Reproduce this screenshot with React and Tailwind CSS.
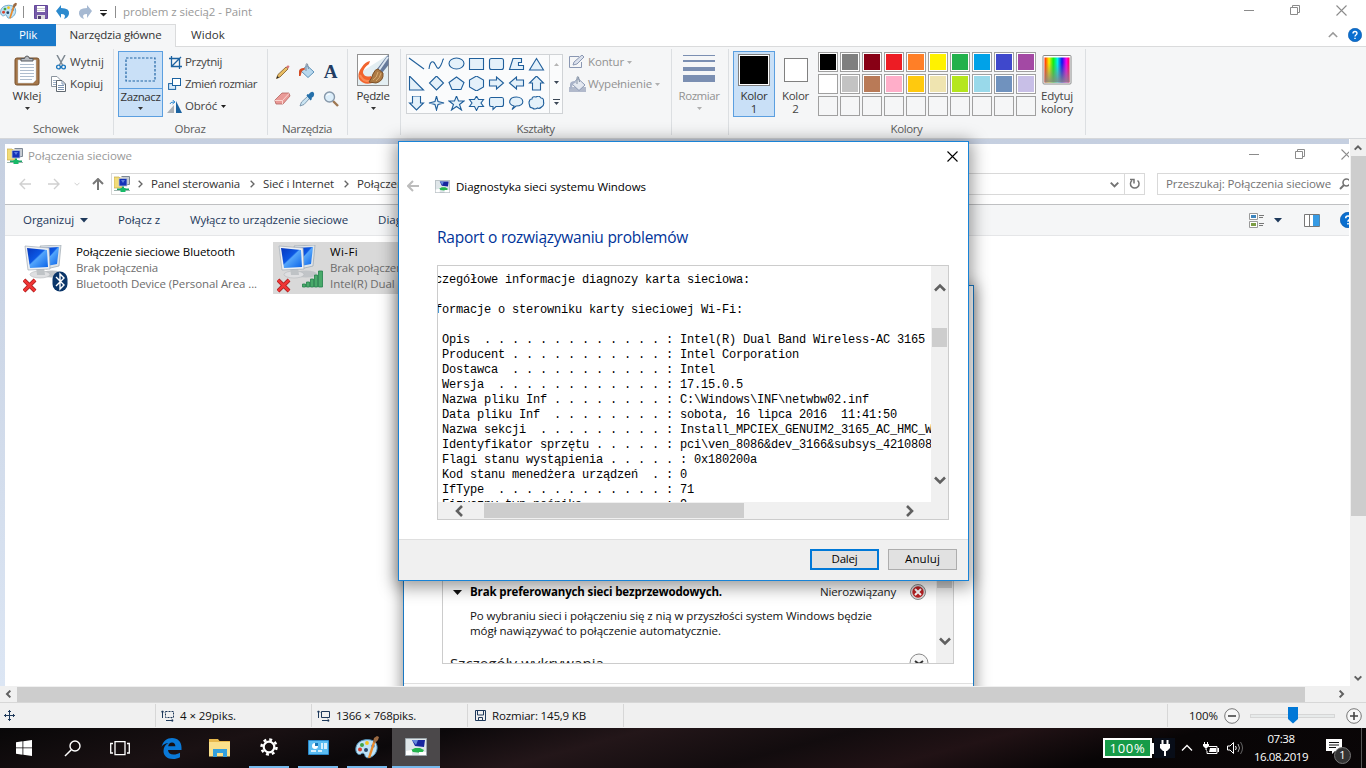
import React, { useLayoutEffect, useRef, useState } from "react";

// A single-line label whose tracking is computed so that it fills a given width.
function T({ w, className = "", children }) {
  const ref = useRef(null);
  const [spacing, setSpacing] = useState(0);
  useLayoutEffect(() => {
    const n = String(children).length;
    const natural = ref.current.getBoundingClientRect().width;
    if (w && n > 1) setSpacing((w - natural) / n);
  }, []);
  return (
    <span className={"block shrink-0 whitespace-nowrap " + className}>
      <span ref={ref} style={{ letterSpacing: spacing + "px" }}>{children}</span>
    </span>
  );
}

const Caret = ({ className = "text-[#1e1e1e]" }) => (
  <svg className={"shrink-0 " + className} width="5" height="3" viewBox="0 0 5 3"><path d="M0 0h5L2.500 3z" fill="currentColor" /></svg>
);

const Palette = ({ size = 17 }) => (
  <svg width={size} height={size} viewBox="0 0 24 24" className="shrink-0">
    <path d="M9 5C3 6 0 11 1 16c1 4 4 4 5 3 2-2 4 0 4 2 1 3 6 2 9-1 4-4 4-10 1-13-2-2-7-3-11-2z" fill="#bfe3f7" stroke="#4d8fb8" strokeWidth="1" />
    <circle cx="7" cy="10" r="2" fill="#41a447" /><circle cx="12" cy="8" r="1.900" fill="#f3c31b" />
    <circle cx="5" cy="14.500" r="2" fill="#d8412f" /><circle cx="11" cy="15" r="2" fill="#27496b" /><circle cx="18" cy="11" r="1.800" fill="#3a7fd0" />
    <path d="M14 23L19.500 6" stroke="#e98a2b" strokeWidth="2.400" /><path d="M18 7l1-4 3-2 2 1-1 3-3 3z" fill="#9b6a43" />
  </svg>
);

const MinIcon = () => <svg width="10" height="10" viewBox="0 0 10 10" className="text-[#8b8b8b]"><path d="M0 5.500h10" stroke="currentColor" /></svg>;
const RestoreIcon = () => <svg width="10" height="10" viewBox="0 0 10 10"><path d="M.5 2.500h7v7h-7zM2.500 2.500v-2h7v7h-2" fill="none" stroke="#8b8b8b" /></svg>;
const CloseIcon = ({ className = "text-[#8b8b8b]" }) => <svg width="11" height="11" viewBox="0 0 11 11" className={"shrink-0 " + className}><path d="M.5.5l10 10M10.500.5l-10 10" stroke="currentColor" strokeWidth="1.100" /></svg>;

const Help = ({ size = 14 }) => (
  <svg width={size} height={size} viewBox="0 0 14 14" className="shrink-0">
    <circle cx="7" cy="7" r="6.700" fill="#0a6fd0" stroke="#0655a8" strokeWidth=".6" />
    <path d="M5 5.400Q5 3.500 7 3.500T9 5.300Q9 6.300 7.900 7 7 7.600 7 8.600M7 9.700v1.300" fill="none" stroke="#fff" strokeWidth="1.400" />
  </svg>
);

// Chevrons used by scroll bars
const paths = { up: "M1 7l5-5 5 5", down: "M1 2l5 5 5-5", left: "M8 1L3 6l5 5", right: "M4 1l5 5-5 5" };
const Chev = ({ dir, size = 12, sw = 2.600, className = "text-[#606060]" }) => (
  <svg width={size} height={size} viewBox={dir === "up" || dir === "down" ? "0 -1.500 12 12" : "0 0 12 12"} className={"shrink-0 " + className}>
    <path d={paths[dir]} fill="none" stroke="currentColor" strokeWidth={sw} />
  </svg>
);

const ClipboardIcon = () => (
  <svg width="26" height="32" viewBox="0 0 26 32">
    <rect x="1" y="4" width="24" height="27" rx="2" fill="#a5774a" stroke="#77502c" />
    <path d="M4 6h18v20l-3 3H4z" fill="#fdfeff" stroke="#c5ccd3" strokeWidth=".5" />
    <path d="M6 10.500h14M6 13.500h14M6 16.500h14M6 19.500h14M6 22.500h14M6 25.500h12" stroke="#aebdce" />
    <path d="M7 7V4.500h3.500Q11 2 13 2t2.500 2.500H19V7z" fill="#b6bac0" stroke="#55595e" />
  </svg>
);
const ScissorsIcon = () => (
  <svg width="10" height="15" viewBox="0 0 10 15"><path d="M1 0l5.500 10M9 0L3.500 10" stroke="#7d8790" strokeWidth="1.500" />
    <circle cx="2.500" cy="12" r="1.900" fill="none" stroke="#1d77bd" strokeWidth="1.400" /><circle cx="7.500" cy="12" r="1.900" fill="none" stroke="#1d77bd" strokeWidth="1.400" /></svg>
);
const CopyIcon = () => (
  <svg width="16" height="16" viewBox="0 0 16 16"><path d="M.5.5H6l3 3v7H.5z" fill="#fff" stroke="#8b949e" /><path d="M2 4.500h5M2 6.500h5M2 8.500h3" stroke="#9db1c8" />
    <path d="M5.500 4.500H11l3.500 3.500v7.500h-9z" fill="#fff" stroke="#606870" /><path d="M7 9.500h6M7 11.500h6M7 13.500h6M11 5v3h3" fill="none" stroke="#7c95b4" /></svg>
);
const CropIcon = () => <svg width="13" height="13" viewBox="0 0 13 13"><path d="M2.500 0v10.500H13M0 2.500h10.500V13M3 10l9-9" fill="none" stroke="#1b62a0" strokeWidth="1.300" /></svg>;
const ResizeIcon = () => <svg width="13" height="12" viewBox="0 0 13 12"><rect x=".6" y="5.600" width="7" height="5.800" fill="#d8eafa" stroke="#1b62a0" /><rect x="4.500" y=".5" width="8" height="7" fill="#fff" stroke="#1b62a0" /></svg>;
const RotateIcon = () => <svg width="15" height="13" viewBox="0 0 15 13"><path d="M7 5v8H0z" fill="#aab0b6" /><path d="M9 1v12h6z" fill="#1b62a0" /><path d="M3 4Q3 2 7 2M5.500 0L8 2 5.500 4" fill="none" stroke="#2f8ad2" /></svg>;
const PencilIcon = () => <svg width="16" height="16" viewBox="0 0 16 16"><path d="M1.500 14.500l1.500-4L11 3l2 2-8 8z" fill="#e9bd62" stroke="#7c5a28" strokeWidth=".8" /><path d="M11 3l1.500-1.500q1.500-.5 2 1L13 5z" fill="#d97878" /><path d="M1.500 14.500l1-2.500 1.500 1.500z" fill="#222" /></svg>;
const BucketIcon = ({ gray }) => (
  <svg width="17" height="17" viewBox="0 0 17 17">
    {gray && <path d="M0 11h17v5H0z" fill="#b1b9cb" />}
    <path d="M9 2.500l7 6.500-6 5.500L3 8z" fill={gray ? "#e4e8f0" : "#b8d8ee"} stroke={gray ? "#8c99b5" : "#5e93b9"} />
    <path d="M8 8V2q0-2 1.500-1l1 5" fill="none" stroke="#8290a3" />
    <path d="M1 13V8.500q0-3.500 5-3.500l1.500 1-3.500 2-1.500 5z" fill={gray ? "#a8b2c8" : "#d44c25"} />
  </svg>
);
const EraserIcon = () => <svg width="17" height="14" viewBox="0 0 17 14"><path d="M1 8l7-7h7l1 3-7 8H2L1 9z" fill="#ea9a97" stroke="#b46460" strokeWidth=".8" /><path d="M1 8.500h7.500L15.500 1M8.500 8.500V12" fill="none" stroke="#fad5d0" /></svg>;
const PickerIcon = () => <svg width="16" height="16" viewBox="0 0 16 16"><path d="M1 15l1.500-4L9 5l2 2-6 6.500z" fill="#cae4f2" stroke="#6987a0" strokeWidth=".8" /><path d="M7.500 4.500l1-1.500 1 .5Q12 0 14 1t.5 4.500l-2 1.500.5 1-1.500 1.500z" fill="#2570aa" /></svg>;
const LensIcon = () => <svg width="16" height="16" viewBox="0 0 16 16"><path d="M10 10l5 5" stroke="#9e7752" strokeWidth="2.400" /><circle cx="6.500" cy="6" r="5" fill="#dceefa" stroke="#8798aa" strokeWidth="1.400" /><path d="M3.500 5Q4 3 7 3" stroke="#fff" fill="none" /></svg>;
const BrushIcon = () => (
  <svg width="32" height="32" viewBox="0 0 32 32"><rect x=".5" y=".5" width="31" height="31" fill="#e3eef2" stroke="#939393" />
    <path d="M1 1h30L1 20z" fill="#fff" />
    <path d="M5 13Q8 8 13 7l-1 3Q6 14 6 19q2 5 8 3l3 6c-5 3-12 2-15-3Q0 19 5 13z" fill="#f1642e" />
    <path d="M3 21q3 7 10 6" fill="none" stroke="#fa8a55" strokeWidth="2" />
    <path d="M20 15L30 2l1.500-1v10L25 19z" fill="#667a9b" /><path d="M22 16l9-13" stroke="#dbe6f2" strokeWidth="2" />
    <path d="M26 19q1 8-7 10l-7-1q3-4 4-8 2-5 5-5z" fill="#ad7b45" stroke="#7a4f26" /><path d="M16 26q4-2 5-8M19 27q4-3 5-8" fill="none" stroke="#d8ac70" /></svg>
);
const RainbowIcon = () => (
  <svg width="30" height="30" viewBox="0 0 30 30"><defs>
    <linearGradient id="hue"><stop offset="0" stopColor="#f20" /><stop offset=".18" stopColor="#fe0" /><stop offset=".35" stopColor="#1e1" /><stop offset=".52" stopColor="#0ee" /><stop offset=".7" stopColor="#11e" /><stop offset=".87" stopColor="#f0e" /><stop offset="1" stopColor="#f04" /></linearGradient>
    <linearGradient id="fade" x2="0" y2="1"><stop offset=".2" stopColor="#888" stopOpacity="0" /><stop offset="1" stopColor="#888" stopOpacity=".9" /></linearGradient></defs>
    <rect x="1" y=".5" width="28" height="28.500" rx="1" fill="#fff" stroke="#898989" /><path d="M2.500 2.500h25v25h-25z" fill="url(#hue)" /><path d="M2.500 2.500h25v25h-25z" fill="url(#fade)" /></svg>
);

const shapes = [
  "M1 1l15 11", "M1 12C2 4 5 3 7 7s3 7 6 1 1-6 3-6", "M1 6.500a7.500 5.500 0 1 0 15 0a7.500 5.500 0 1 0-15 0", "M1.500 1.500h14v11h-14z", "M3.500 1.500h10q2 0 2 2v7q0 2-2 2h-10q-2 0-2-2v-7q0-2 2-2z", "M5 1.500h8.500v4h-3v3h5v4H1.500z", "M8.500 1.500l7 11.500h-14z",
  "M1.500 0v14h14z", "M8.500 0l7 7-7 7-7-7z", "M8.500 1l7.500 5.500-3 7h-9l-3-7z", "M8.500 0l7 4v7l-7 4-7-4V4z", "M1.500 4h7V1l7 6-7 6v-3h-7z", "M15.500 4h-7V1l-7 6 7 6v-3h7z", "M8.500 0l7 7h-3v7h-8V7h-3z",
  "M4.500 0h8v7h3l-7 7-7-7h3z", "M8.500 0l1.500 5.500 6 1.500-6 1.500L8.500 14 7 8.500 1 7l6-1.500z", "M8.500 0l2 5h5.500l-4.500 3.500 2 5.500-5-3.500-5 3.500 2-5.500L1 5h5.500z", "M8.500 0l2 3.500h5L13 7l2.500 3.500h-5l-2 4-2-4h-5L4 7 1.500 3.500h5z", "M3 1.500h11q1.500 0 1.500 2v5q0 2-2 2H8l-3 3v-3H3q-1.500 0-1.500-2v-5q0-2 1.500-2z", "M6 10C-1 8 1 1 8.500 1S18 10 8 10l-4 3.500z", "M4 3q0-3 4-2 3-2 5 1 3 0 2.500 4 1 3-2 5-2 2-4 1-3 2-5 0-3 0-3-3-1-3 0-4 0-2 2.500-2z"
];

const swatches = ["bg-black", "bg-[#7f7f7f]", "bg-[#880015]", "bg-[#ed1c24]", "bg-[#ff7f27]", "bg-[#fff200]", "bg-[#22b14c]", "bg-[#00a2e8]", "bg-[#3f48cc]", "bg-[#a349a4]",
  "bg-white", "bg-[#c3c3c3]", "bg-[#b97a57]", "bg-[#ffaec9]", "bg-[#ffc90e]", "bg-[#efe4b0]", "bg-[#b5e61d]", "bg-[#99d9ea]", "bg-[#7092be]", "bg-[#c8bfe7]",
  "", "", "", "", "", "", "", "", "", ""];

const Group = ({ className, label, labelWidth, children }) => (
  <div className={"relative flex h-[92px] shrink-0 flex-col pt-1 " + className}>
    <div className="flex h-[70px]">{children}</div>
    {label && <T w={labelWidth} className="mr-0.5 self-center leading-4 text-[#5c5c5c]">{label}</T>}
    <div className="absolute right-0 top-0.5 h-[86px] w-px bg-[#dcdfe2]" />
  </div>
);

function Ribbon() {
  return (
    <div className="flex h-[92px] shrink-0 border-b border-[#d5d7da] bg-[#f5f6f7]">
      <Group className="w-[114px]" label="Schowek" labelWidth={46}>
        <div className="ml-3 flex w-[30px] flex-col items-center pt-[3px]">
          <ClipboardIcon /><T w={29} className="mt-0.5 leading-4">Wklej</T><Caret className="mt-[3px]" />
        </div>
        <div className="ml-[9px] flex flex-col text-[#444]">
          <div className="flex h-[22px] items-center"><div className="flex w-[19px] justify-center"><ScissorsIcon /></div><T w={34}>Wytnij</T></div>
          <div className="flex h-[22px] items-center"><div className="w-[19px]"><CopyIcon /></div><T w={33}>Kopiuj</T></div>
        </div>
      </Group>
      <Group className="w-[154px]" label="Obraz" labelWidth={31}>
        <div className="ml-1 flex h-[66px] w-[45px] flex-col items-center border border-[#5b9fe0] bg-[#c9e0f7]">
          <div className="flex h-[37px] w-full items-center justify-center border-b border-[#5b9fe0]">
            <svg width="31" height="26" viewBox="0 0 31 26"><path d="M1 1h29v23H1z" fill="none" stroke="#2064a4" strokeWidth="1.200" strokeDasharray="2.500 1.500" /></svg>
          </div>
          <T w={40} className="leading-[15px]">Zaznacz</T><Caret className="mt-[3px]" />
        </div>
        <div className="ml-1 flex flex-col text-[#444]">
          <div className="flex h-[22px] items-center"><div className="w-[18px] pl-0.5"><CropIcon /></div><T w={37}>Przytnij</T></div>
          <div className="flex h-[22px] items-center"><div className="w-[18px] pl-px"><ResizeIcon /></div><T w={72}>Zmień rozmiar</T></div>
          <div className="flex h-[22px] items-center"><div className="w-[18px]"><RotateIcon /></div><T w={32}>Obróć</T><Caret className="ml-1 text-[#1e1e1e]" /></div>
        </div>
      </Group>
      <Group className="w-[80px]" label="Narzędzia" labelWidth={50}>
        <div className="ml-1.5 mt-[7px] grid h-[55px] grid-cols-3 grid-rows-2 place-items-center gap-x-[7px]">
          <PencilIcon /><BucketIcon /><span className="font-['Liberation_Serif',serif] text-[19px] font-bold leading-5 text-[#223d63]">A</span>
          <EraserIcon /><PickerIcon /><LensIcon />
        </div>
      </Group>
      <Group className="w-[53px]">
        <div className="flex w-[50px] flex-col items-center pt-[3px]"><BrushIcon /><T w={33} className="mt-0.5 leading-4">Pędzle</T><Caret className="mt-[3px]" /></div>
      </Group>
      <Group className="w-[271px]" label="Kształty" labelWidth={38}>
        <div className="ml-[5px] mt-[3px] flex h-[60px] w-[157px] border border-[#d0d3d6] bg-[#fafbfc]">
          <div className="grid w-[142px] grid-cols-7 place-items-center pr-[3px]">
            {shapes.map((d, i) => <svg key={i} width="17" height="15" viewBox="0 0 17 15"><path d={d} fill={i < 2 ? "none" : "#e4f1fa"} stroke="#205f9b" strokeWidth="1.100" /></svg>)}
          </div>
          <div className="flex grow flex-col items-center justify-around border-l border-[#d0d3d6] text-[#3b4756]">
            <Caret className="rotate-180 text-[#b5b5b5]" /><Caret className="" />
            <div className="flex flex-col items-center gap-0.5"><div className="h-px w-[7px] bg-[#3b4756]" /><Caret className="" /></div>
          </div>
        </div>
        <div className="ml-1.5 flex flex-col text-[#929292]">
          <div className="flex h-[22px] items-center"><div className="w-[19px]"><svg width="16" height="14" viewBox="0 0 16 14"><path d="M10 1.500H.5v11h12V7" fill="none" stroke="#8a97b2" /><path d="M4 10l1-3 8-7 2 2-7 7z" fill="#dbe1ed" stroke="#8a97b2" /></svg></div><T w={36}>Kontur</T><Caret className="ml-[3px] text-[#b0b0b0]" /></div>
          <div className="flex h-[22px] items-center"><div className="w-[19px]"><BucketIcon gray /></div><T w={64}>Wypełnienie</T><Caret className="ml-[3px] text-[#b0b0b0]" /></div>
        </div>
      </Group>
      <Group className="w-[57px]">
        <div className="flex w-[54px] flex-col items-center pt-1 text-[#929292]">
          <div className="flex h-[31px] w-8 flex-col items-stretch"><div className="h-px bg-[#7b8fb2]" /><div className="mt-1 h-0.5 bg-[#7b8fb2]" /><div className="mt-[5px] h-1 bg-[#7b8fb2]" /><div className="mt-1 h-[7px] bg-[#7b8fb2]" /></div>
          <T w={41} className="mt-0.5 leading-4">Rozmiar</T><Caret className="mt-[3px] text-[#b0b0b0]" />
        </div>
      </Group>
      <Group className="w-[357px]" label="Kolory" labelWidth={32}>
        <div className="ml-1 flex h-[66px] w-[42px] flex-col items-center border border-[#5b9fe0] bg-[#c9e0f7] pt-0.5">
          <div className="h-8 w-8 border border-[#808080] bg-white p-px"><div className="h-full w-full bg-black" /></div>
          <T w={27} className="mt-[3px] leading-[13px]">Kolor</T><T className="leading-[13px]">1</T>
        </div>
        <div className="flex w-[41px] flex-col items-center pt-[7px] text-[#444]">
          <div className="h-6 w-6 border border-[#808080] bg-white" />
          <T w={27} className="mt-[7px] leading-[13px]">Kolor</T><T className="leading-[13px]">2</T>
        </div>
        <div className="ml-0.5 mt-px grid h-16 grid-cols-10 gap-0.5">
          {swatches.map((c, i) => <div key={i} className={"h-5 w-5 border border-[#a0a0a0] p-px " + (c ? "bg-white" : "bg-[#f5f6f7]")}><div className={"h-full w-full " + c} /></div>)}
        </div>
        <div className="ml-[3px] flex w-[36px] flex-col items-center pt-1 text-[#444]"><RainbowIcon /><T w={32} className="mt-1 leading-[13px]">Edytuj</T><T w={32} className="leading-[13px]">kolory</T></div>
      </Group>
    </div>
  );
}

function TitleBar() {
  return (
    <div className="flex h-6 shrink-0 items-center bg-white">
      <div className="w-[23px] pb-1"><Palette size={17} /></div>
      <div className="h-3 w-px bg-[#8e8e8e]" />
      <svg className="ml-2.5" width="14" height="14" viewBox="0 0 14 14"><path d="M.5.5h13v13h-13z" fill="#765ba8" stroke="#64479a" /><path d="M3 1h8v6H3z" fill="#fff" /><path d="M3 3.500h8M3 5.500h8" stroke="#ccc" /><path d="M3 10h8v4H3z" fill="#ddd" /><path d="M4 11h3v3H4z" fill="#514070" /></svg>
      <svg className="ml-2" width="15" height="15" viewBox="0 0 15 15"><path d="M5 0v3q9 0 8 6-1 4-5 5 3-5-3-5v4L0 6z" fill="#2c8ace" /></svg>
      <svg className="ml-1.5" width="15" height="15" viewBox="0 0 15 15"><path d="M10 0v3q-9 0-8 6 1 4 5 5-3-5 3-5v4l5-7z" fill="#a6b9d2" /></svg>
      <svg className="ml-2 mt-0.5" width="7" height="7" viewBox="0 0 7 7"><path d="M0 .5h7" stroke="#222" /><path d="M0 3h7L3.500 6.500z" fill="#222" /></svg>
      <div className="ml-2 h-3 w-px bg-[#8e8e8e]" />
      <T w={129} className="ml-[7px] text-[#999]">problem z siecią2 - Paint</T>
      <div className="ml-auto flex gap-9 pb-1 pr-[19px]"><MinIcon /><RestoreIcon /><CloseIcon /></div>
    </div>
  );
}

function Tabs() {
  return (
    <div className="flex h-[23px] shrink-0 items-stretch border-b border-[#dadbdc] bg-white">
      <div className="flex w-14 items-center justify-center bg-[#1979ca] text-white"><T w={18}>Plik</T></div>
      <div className="-mb-px flex w-[120px] items-center justify-center border-r border-t border-[#dadbdc] bg-[#f5f6f7] pb-0.5"><T w={92}>Narzędzia główne</T></div>
      <div className="ml-[15px] flex items-center"><T w={34}>Widok</T></div>
      <div className="ml-auto flex items-center gap-2.5 pr-1"><Chev dir="up" size={10} sw={1.800} className="text-[#999]" /><Help /></div>
    </div>
  );
}

const NetIcon = () => (
  <svg width="16" height="17" viewBox="0 0 16 17" className="shrink-0"><path d="M0 1h5l1 1h2v10H0z" fill="#f2dc78" stroke="#c4a94a" strokeWidth=".7" /><path d="M7.500.5h8v8h-3" fill="#c9cdd3" stroke="#7d8894" /><path d="M5 2.500h8v7.500H5z" fill="#1532b9" stroke="#b8c3d4" strokeWidth=".8" /><path d="M7 4h4l-2 3z" fill="#5d7de0" /><path d="M8 10.500h2v2h5v2H3v-2h5z" fill="#19a567" /><path d="M0 14.500h16" stroke="#9cb4ae" /><path d="M6.500 12h5v4h-5z" fill="#18bb68" /></svg>
);
const ScreenIcon = ({ w = 15, h = 13 }) => (
  <svg width={w} height={h} viewBox="0 0 22 18" preserveAspectRatio="none" className="shrink-0"><path d="M.5.5h21v17H.5z" fill="#dfe6e9" stroke="#9ba5ab" /><path d="M7 2h13l-1 7-9-1z" fill="#17259e" /><path d="M7 2h6l-2 5z" fill="#6589da" /><path d="M6 12l4-2h5l4 2-2 3-9-1z" fill="#24b44d" /><path d="M1 13l6-1v5H1zM14 14h7v3h-7z" fill="#fff" /></svg>
);
const Computers = ({ kind }) => (
  <svg width="48" height="50" viewBox="0 0 48 50" className="shrink-0">
    <defs><linearGradient id="scr" x2="1" y2="1"><stop offset="0" stopColor="#0737bd" /><stop offset=".45" stopColor="#0c58e4" /><stop offset=".5" stopColor="#54a6fb" /><stop offset="1" stopColor="#0962e8" /></linearGradient></defs>
    <ellipse cx="29" cy="29" rx="11" ry="3.500" fill="#c1c4c7" /><ellipse cx="17" cy="29.500" rx="10" ry="3.500" fill="#dedfe1" stroke="#b6b9bc" strokeWidth=".6" />
    <path d="M17 1l21-1-2 21-13 3z" fill="#dee4e9" stroke="#9ba6b0" strokeWidth=".7" /><path d="M19 3l17-1-2 17-10 2z" fill="url(#scr)" />
    <path d="M13 22h8l1 8h-8z" fill="#bfc3c6" /><path d="M2 1l24 2 1 21-22 1z" fill="#eef1f4" stroke="#a2abb4" strokeWidth=".7" /><path d="M4 3l20 2 1 17-18 1z" fill="url(#scr)" />
    <path d="M1 35l11 11M12 35L1 46" stroke="#9f1d1d" strokeWidth="4" /><path d="M1 35l11 11M12 35L1 46" stroke="#f03535" strokeWidth="2.500" />
    {kind === "bt" ? <g><rect x="29.500" y="26.500" width="15" height="20" rx="7.500" fill="#0a3569" /><path d="M33 32l8 8-4 4V29l4 4-8 8" fill="none" stroke="#fff" strokeWidth="1.400" /></g>
      : <g fill="#49aa6a" stroke="#22804a" strokeWidth=".8"><path d="M25.500 39h3v3h-3zM29.500 37h3v5h-3zM33.500 34h3v8h-3zM37.500 30h3v12h-3zM41.500 26h4v16h-4z" /></g>}
  </svg>
);

const Arrow = ({ dir = "left", className, big }) => <svg width={12} height={12} viewBox="0 0 12 12" className={"shrink-0 " + className + (dir === "right" ? " rotate-180" : dir === "up" ? " rotate-90" : "")}><path d="M12 6H1M6 1L1 6l5 5" fill="none" stroke="currentColor" strokeWidth={big ? 2 : 1.400} /></svg>;
const Crumb = () => <Chev dir="right" size={8} sw={2} className="text-[#666]" />;

function Explorer() {
  return (
    <div className="ml-[5px] mt-[5px] flex h-[542px] w-[1344px] flex-col overflow-hidden bg-white">
      <div className="flex h-6 shrink-0 items-center pl-0.5">
        <NetIcon /><T w={104} className="ml-[5px] text-[#999]">Połączenia sieciowe</T>
        <div className="-mr-[3px] ml-auto flex shrink-0 gap-9 pb-1"><MinIcon /><RestoreIcon /><CloseIcon /></div>
      </div>
      <div className="flex h-9 shrink-0 items-start pt-[5px]">
        <div className="flex h-[22px] w-[106px] shrink-0 items-center pl-3.5">
          <Arrow className="text-[#d0d0d0]" /><Arrow dir="right" className="ml-[17px] text-[#d0d0d0]" /><Chev dir="down" size={6} sw={2} className="ml-3.5 text-[#d0d0d0]" /><Arrow dir="up" big className="ml-3 text-[#777]" />
        </div>
        <div className="flex h-[22px] w-[1034px] shrink-0 items-center border border-[#d9d9d9] pl-0.5">
          <NetIcon /><div className="ml-1.5"><Crumb /></div><T w={89} className="ml-[7px]">Panel sterowania</T><div className="ml-2"><Crumb /></div><T w={71} className="ml-[7px]">Sieć i Internet</T><div className="ml-2"><Crumb /></div><T w={104} className="ml-[7px]">Połączenia sieciowe</T>
          <div className="ml-auto mr-[5px]"><Chev dir="down" size={9} className="text-[#737373]" /></div>
          <div className="flex h-full w-5 items-center justify-center border-l border-[#d9d9d9]">
            <svg width="11" height="12" viewBox="0 0 11 12"><path d="M8.500 2.500A4.300 4.300 0 1 1 3 2.500M1 1.500h4v4" fill="none" stroke="#737373" strokeWidth="1.500" /></svg>
          </div>
        </div>
        <div className="ml-3 flex h-[22px] w-[200px] shrink-0 items-center border border-[#d9d9d9] pl-2 text-[#737373]">
          <T w={165}>Przeszukaj: Połączenia sieciowe</T>
          <svg className="ml-2 shrink-0" width="12" height="12" viewBox="0 0 12 12"><circle cx="7.500" cy="4.500" r="3.500" fill="none" stroke="#737373" strokeWidth="1.600" /><path d="M5 7l-4 4" stroke="#737373" strokeWidth="2" /></svg>
        </div>
      </div>
      <div className="flex h-8 shrink-0 items-center border-b border-t border-b-[#e5e6e8] border-t-[#bfc0c2] bg-[#f5f6f7] text-[#1e395b]">
        <T w={51} className="ml-[18px]">Organizuj</T><svg className="ml-1.5" width="8" height="5" viewBox="0 0 8 5"><path d="M0 0h8L4 4.500z" fill="#1e395b" /></svg>
        <T w={42} className="ml-[30px]">Połącz z</T><T w={158} className="ml-[30px]">Wyłącz to urządzenie sieciowe</T><T w={128} className="ml-[30px]">Diagnozuj to połączenie</T>
        <svg className="ml-auto shrink-0" width="15" height="15" viewBox="0 0 15 15"><path d="M.5.5h8v6h-8zM.5 8.500h8v6h-8z" fill="#fff" stroke="#999" /><path d="M2 2h5v3H2z" fill="#3c84bd" /><path d="M2 10h5v3H2z" fill="#7c9d44" /><path d="M10 2.500h5M10 4.500h4M10 10.500h5M10 12.500h4" stroke="#777" /></svg>
        <svg className="ml-2.5 shrink-0" width="8" height="5" viewBox="0 0 8 5"><path d="M0 0h8L4 4.500z" fill="#1e395b" /></svg>
        <svg className="ml-[22px] shrink-0" width="16" height="13" viewBox="0 0 16 13"><path d="M.5.5h15v12H.5zM5.500 1v11" fill="#fff" stroke="#777" /><path d="M9 1h6.500v11H9z" fill="#379be4" /></svg>
        <div className="-mr-[7px] ml-5 shrink-0"><Help size={16} /></div>
      </div>
      <div className="flex pt-1.5">
        <div className="ml-[15px] flex h-[52px] w-[253px] pl-[3px] pt-[3px]"><Computers kind="bt" />
          <div className="-mt-px ml-[5px] leading-4 text-[#6d6d6d]"><T w={159} className="text-black">Połączenie sieciowe Bluetooth</T><T w={82}>Brak połączenia</T><T w={181}>Bluetooth Device (Personal Area ...</T></div></div>
        <div className="flex h-[52px] w-[253px] bg-[#d9d9d9] pl-1 pt-[3px]"><Computers kind="wifi" />
          <div className="-mt-px ml-[5px] leading-4 text-[#6d6d6d]"><T w={28} className="text-black">Wi-Fi</T><T w={82}>Brak połączenia</T><T w={190}>Intel(R) Dual Band Wireless-AC 3165</T></div></div>
      </div>
    </div>
  );
}

function Troubleshooter() {
  return (
    <div className="absolute left-[403px] top-[146px] flex h-[420px] w-[571px] flex-col border border-[#1a78c2] bg-white shadow-[0_2px_14px_2px_rgba(0,0,0,0.4)]">
      <div className="ml-[38px] flex h-[378px] w-[512px] flex-none border border-t-0 border-[#ccc]">
        <div className="flex grow flex-col overflow-hidden pt-[298px]">
          <div className="flex h-4 items-center"><svg className="ml-2.5 shrink-0" width="9" height="5" viewBox="0 0 9 5"><path d="M0 0h9L4.500 5z" fill="#111" /></svg><T w={252} className="ml-2 font-bold text-black">Brak preferowanych sieci bezprzewodowych.</T><T w={76} className="ml-auto text-[#222]">Nierozwiązany</T>
            <svg className="ml-3.5 mr-[10px] shrink-0" width="16" height="16" viewBox="0 0 16 16"><circle cx="8" cy="8" r="7.500" fill="#ddd" stroke="#888" /><circle cx="8" cy="8" r="5.700" fill="#bd2325" /><path d="M5 5l6 6M11 5l-6 6" stroke="#fff" strokeWidth="2" /></svg></div>
          <div className="ml-[27px] mt-2 leading-[15px] text-[#111]"><T w={402}>Po wybraniu sieci i połączeniu się z nią w przyszłości system Windows będzie</T><T w={251}>mógł nawiązywać to połączenie automatycznie.</T></div>
          <div className="flex h-[26px] shrink-0 justify-between px-[7px] pt-[13px]"><T w={154} className="mt-px text-[15px] leading-[22px] text-[#222]">Szczegóły wykrywania</T><svg className="mt-0.5 shrink-0" width="20" height="20" viewBox="0 0 20 20"><circle cx="10" cy="10" r="9" fill="#f6f6f6" stroke="#888" /><path d="M6 8l4 3 4-3" fill="none" stroke="#333" strokeWidth="2" /></svg></div>
        </div>
        <div className="flex w-[17px] shrink-0 flex-col items-center justify-end bg-[#f0f0f0] pb-4"><div className="mb-[47px] h-[50px] w-[15px] bg-[#cdcdcd]" /><Chev dir="down" /></div>
      </div>
      <div className="mt-[19px] h-[18px] shrink-0 border-t border-[#dfdfdf] bg-[#fcfcfc]" />
    </div>
  );
}

const dots = (n) => Array(n).fill(".").join(" ");
const line = (name, gap, n, value) => "   " + name + " ".repeat(gap) + dots(n) + " : " + value;
const report = [
  "Szczegółowe informacje diagnozy karta sieciowa:", "", "Informacje o sterowniku karty sieciowej Wi-Fi:", "",
  line("Opis", 2, 13, "Intel(R) Dual Band Wireless-AC 3165"), line("Producent", 1, 11, "Intel Corporation"), line("Dostawca", 2, 11, "Intel"),
  line("Wersja", 2, 12, "17.15.0.5"), line("Nazwa pliku Inf", 1, 8, "C:\\Windows\\INF\\netwbw02.inf"), line("Data pliku Inf", 2, 8, "sobota, 16 lipca 2016  11:41:50"),
  line("Nazwa sekcji", 2, 9, "Install_MPCIEX_GENUIM2_3165_AC_HMC_WIN"), line("Identyfikator sprzętu", 1, 5, "pci\\ven_8086&dev_3166&subsys_42108086"),
  line("Flagi stanu wystąpienia", 1, 5, "0x180200a"), line("Kod stanu menedżera urządzeń", 2, 1, "0"), line("IfType", 2, 12, "71"), line("Fizyczny typ nośnika", 2, 5, "9")
].join("\n");

function Dialog() {
  return (
    <div className="absolute left-[398px] top-[141px] flex h-[440px] w-[571px] flex-col border border-[#1883d7] bg-white shadow-[0_3px_16px_3px_rgba(0,0,0,0.4)]">
      <div className="flex h-7 shrink-0 items-center justify-end pr-2.5"><CloseIcon className="text-black" /></div>
      <div className="flex h-8 shrink-0 items-center pl-2"><Arrow className="text-[#bcbcbc]" big /><div className="ml-4"><ScreenIcon /></div><T w={190} className="ml-1.5 pt-0.5 text-black">Diagnostyka sieci systemu Windows</T></div>
      <T w={251} className="ml-[38px] mt-[23px] text-[15.5px] leading-6 text-[#003399]">Raport o rozwiązywaniu problemów</T>
      <div className="ml-[38px] mt-4 flex h-[255px] w-[512px] shrink-0 flex-col border border-[#ccc] bg-[#f0f0f0]">
        <div className="flex h-[236px] overflow-hidden">
          <div className="w-[493px] overflow-hidden bg-white pt-[7px]"><pre className="-ml-[17px] font-['Liberation_Mono',monospace] text-[12px] leading-[15px] tracking-[-0.201px] text-black">{report}</pre></div>
          <div className="flex w-[17px] flex-col items-center pt-4"><Chev dir="up" /><div className="mt-[34px] h-[19px] w-[15px] bg-[#cdcdcd]" /><div className="mt-[127px]"><Chev dir="down" /></div></div>
        </div>
        <div className="flex h-[17px] items-center pl-4"><Chev dir="left" /><div className="ml-[18px] h-[15px] w-[260px] bg-[#cdcdcd]" /><div className="ml-[159px]"><Chev dir="right" /></div></div>
      </div>
      <div className="mt-auto flex h-[41px] shrink-0 items-center justify-end gap-[9px] border-t border-[#dfdfdf] bg-[#f0f0f0] pb-0.5 pr-[11px] text-black">
        <div className="flex h-[21px] w-[69px] items-center justify-center border-2 border-[#0078d7] bg-[#e1e1e1]"><T w={26}>Dalej</T></div>
        <div className="flex h-[21px] w-[69px] items-center justify-center border border-[#adadad] bg-[#e1e1e1]"><T w={35}>Anuluj</T></div>
      </div>
    </div>
  );
}

const SizeIcon = ({ dashed }) => <svg className="shrink-0" width="13" height="12" viewBox="0 0 13 12"><path d="M1.500 8V1M0 2.500L1.500.8 3 2.500M5 10.500h7M10.500 9l1.700 1.500-1.700 1.500" fill="none" stroke="#1e395b" /><path d="M4.500 1.500h8v6h-8z" fill="none" stroke="#1e395b" strokeDasharray={dashed ? "2 1" : undefined} /></svg>;
const ZoomBtn = ({ plus }) => <svg className="shrink-0" width="16" height="16" viewBox="0 0 16 16"><circle cx="8" cy="8" r="7.300" fill="#f7f7f7" stroke="#777" /><path d={plus ? "M4 8h8M8 4v8" : "M4 8h8"} stroke="#444" strokeWidth="1.600" /></svg>;

function StatusBar() {
  return (
    <div className="flex h-[26px] shrink-0 items-center border-t border-[#d7d7d7] bg-[#f0f0f0] text-[#111]">
      <div className="flex h-[23px] w-[156px] items-center border-r border-[#d7d7d7] pl-1"><svg width="11" height="11" viewBox="0 0 11 11"><path d="M5.500 0v11M0 5.500h11M4 2l1.500-1.500L7 2M4 9l1.500 1.500L7 9M2 4L.5 5.500 2 7M9 4l1.500 1.500L9 7" fill="none" stroke="#1e395b" /></svg></div>
      <div className="flex h-[23px] w-[156px] items-center border-r border-[#d7d7d7] pl-[5px]"><SizeIcon dashed /><T w={56} className="ml-1.5">4 × 29piks.</T></div>
      <div className="flex h-[23px] w-[156px] items-center border-r border-[#d7d7d7] pl-[5px]"><SizeIcon /><T w={80} className="ml-1.5">1366 × 768piks.</T></div>
      <div className="flex h-[23px] w-[156px] items-center border-r border-[#d7d7d7] pl-[7px]"><svg width="11" height="11" viewBox="0 0 11 11"><path d="M.5.5h10v10h-10zM2.500 1v4h6V1M3.500 10V7.500h4V10" fill="none" stroke="#1e395b" /></svg><T w={94} className="ml-1.5">Rozmiar: 145,9 KB</T></div>
      <div className="ml-auto flex h-[23px] w-[199px] items-center border-l border-[#d7d7d7] pl-[21px]"><T w={29}>100%</T><div className="ml-1.5"><ZoomBtn /></div>
        <div className="relative ml-2.5 h-1 w-[85px] border border-[#d6d6d6] bg-[#e7eaea]"><svg className="absolute left-[37px] top-[-8px]" width="10" height="17" viewBox="0 0 10 17"><path d="M0 0h10v12l-5 4.500L0 12z" fill="#0078d7" /></svg></div>
        <div className="ml-[11px]"><ZoomBtn plus /></div></div>
    </div>
  );
}

function Taskbar() {
  return (
    <div className="flex h-10 shrink-0 items-stretch bg-[linear-gradient(165deg,#080708_0%,#1a1113_18%,#0b080a_30%,#231619_43%,#120c0e_57%,#211215_68%,#080506_80%,#0a0607_100%)] text-white">
      <div className="flex w-12 items-center justify-center"><svg width="16" height="16" viewBox="0 0 16 16"><path d="M0 2.200L6.500 1.300v6.200H0zM7.300 1.200L16 0v7.500H7.300zM0 8.300h6.500v6.400L0 13.800zM7.300 8.300H16V16l-8.700-1.200z" fill="#fff" /></svg></div>
      <div className="flex w-12 items-center justify-center"><svg width="17" height="17" viewBox="0 0 17 17"><circle cx="11" cy="6" r="5" fill="none" stroke="#fff" strokeWidth="1.400" /><path d="M7.300 9.700L1 16" stroke="#fff" strokeWidth="1.500" /></svg></div>
      <div className="flex w-12 items-center justify-center"><svg width="20" height="15" viewBox="0 0 20 15"><path d="M5 .7h10v13H5zM3 2.500H.7v9.500H3M17 2.500h2.300v9.500H17" fill="none" stroke="#fff" strokeWidth="1.300" /></svg></div>
      <div className="ml-[3px] flex w-12 items-center justify-center"><svg width="21" height="21" viewBox="0 0 21 21"><path d="M.5 9C2 3 6 0 11 0c6 0 9.500 4 9.500 9.500V12H7c.2 3 2.500 4.500 5.500 4.500 2.500 0 4.500-.7 6.500-1.800v4.500c-2 1.200-4.500 1.800-7 1.800C6 21 2.500 17.500 2.500 13c0-4 2-6.500 5-8-4 .5-6 2-7 4zm6.700-.7h7.200C14.400 6 13 4.500 11 4.500S7.500 6 7.200 8.300z" fill="#0a79d7" /></svg></div>
      <div className="flex w-[50px] items-center justify-center"><svg width="22" height="18" viewBox="0 0 22 18"><path d="M0 0h9l1.500 2H21v15H0z" fill="#e7b84c" /><path d="M0 3h21v14.500H0z" fill="#fae08b" /><path d="M4 18v-8h14v8h-4v-4H8v4z" fill="#33a0dd" /></svg></div>
      <div className="ml-1 flex w-10 items-center justify-center border-b-2 border-[#76b9ed]">
        <svg width="18" height="18" viewBox="0 0 18 18"><circle cx="9" cy="9" r="5.300" fill="none" stroke="#fff" strokeWidth="2.200" /><circle cx="9" cy="9" r="7.500" fill="none" stroke="#fff" strokeWidth="2.500" strokeDasharray="2.945 2.945" /></svg></div>
      <div className="ml-[9px] flex w-10 items-center justify-center border-b-2 border-[#76b9ed]"><svg width="21" height="15" viewBox="0 0 21 15"><path d="M.5.500h20v14H.5z" fill="#5abcf2" stroke="#2888cb" /><circle cx="7" cy="6" r="3" fill="#fff" /><path d="M7 6V3h3v3z" fill="#1976b6" /><path d="M13 4h2m1 0h3M13 6h2m1 0h3M13 8h2m1 0h3M3 11h5m2 0h4" stroke="#fff" strokeWidth="1.300" /></svg></div>
      <div className="ml-[9px] flex w-10 items-center justify-center border-b-2 border-[#76b9ed]"><Palette size={24} /></div>
      <div className="ml-[5px] flex w-12 items-center justify-center border-b-2 border-[#76b9ed] bg-[#4b484a]"><ScreenIcon w={22} h={18} /></div>
      <div className="ml-auto flex items-center">
        <div className="flex h-5 w-[49px] items-center justify-center border-2 border-white bg-[#169b48]"><T w={36} className="text-[13px] leading-4">100%</T></div><div className="h-[11px] w-0.5 bg-white" />
        <div className="flex h-5 w-[21px] items-center justify-center bg-[#080d18]"><svg width="10" height="16" viewBox="0 0 10 16"><path d="M2.500 0v4M7.500 0v4" stroke="#fff" strokeWidth="2" /><path d="M0 4h10v4l-3 3H3L0 8zM4 11h2v5H4z" fill="#fff" /></svg></div>
        <div className="ml-1.5"><Chev dir="up" size={12} sw={1.300} className="text-white" /></div>
        <svg className="ml-2.5" width="16" height="13" viewBox="0 0 16 13"><path d="M5.500 4.500h8.500v7H4V9" fill="none" stroke="#fff" /><path d="M7 6h6v4H6zM14.500 6H16v4h-1.500zM1 0h1v2h2V0h1v2h1v2L4 6H2L0 4V2h1z" fill="#fff" /><path d="M3 6v2h1" stroke="#fff" fill="none" /></svg>
        <svg className="ml-2" width="17" height="14" viewBox="0 0 17 14"><path d="M.5 5h2.500L6.500 1.500v11L3 9H.5zM8.500 5q1.500 2 0 4" fill="none" stroke="#fff" /><path d="M11 3q3 4 0 8" fill="none" stroke="#aaa" /><path d="M13.500 1q4 6 0 12" fill="none" stroke="#666" /></svg>
        <div className="ml-2.5 flex w-[54px] flex-col items-center gap-1 leading-[14px]"><T w={27}>07:38</T><T w={54}>16.08.2019</T></div>
        <div className="relative ml-[18px] h-5 w-6"><svg width="17" height="17" viewBox="0 0 17 17"><path d="M0 1h16v12H9l-3 3v-3H0z" fill="#fff" /><path d="M3 4.500h10M3 7h10M3 9.500h7" stroke="#111" /></svg>
          <div className="absolute left-2 top-[9px] flex h-[17px] w-[17px] items-center justify-center rounded-full border border-[#777] bg-[#333] text-[11px]">1</div></div>
        <div className="ml-[11px] mr-1 h-10 w-px bg-[#555]" />
      </div>
    </div>
  );
}

export default function App() {
  return (
    <div className="relative flex h-[768px] w-[1366px] flex-col overflow-hidden bg-white font-['Open_Sans','Noto_Sans',sans-serif] text-[11.5px] text-[#333]">
      <TitleBar />
      <Tabs />
      <Ribbon />
      <div className="flex h-[547px] shrink-0">
        <div className="relative h-full w-[1349px] shrink-0 overflow-hidden bg-linear-to-b from-[#c5cfe0] to-[#dce6f4]">
          <Explorer />
          <Troubleshooter />
        </div>
        <div className="ml-px flex w-4 flex-col items-center bg-[#f0f0f0]"><div className="flex h-[17px] items-center"><Chev dir="up" size={8} sw={3} /></div><div className="h-[360px] w-[15px] bg-[#cdcdcd]" /><div className="mb-1 mt-auto"><Chev dir="down" size={8} sw={3} /></div></div>
      </div>
      <div className="flex h-4 shrink-0 items-center bg-[#f0f0f0]"><div className="flex w-[17px] justify-center"><Chev dir="left" size={8} sw={3} /></div><div className="h-[15px] w-[1288px] bg-[#cdcdcd]" /><div className="ml-auto mr-[21px]"><Chev dir="right" size={8} sw={3} /></div></div>
      <StatusBar />
      <Taskbar />
      <Dialog />
    </div>
  );
}
